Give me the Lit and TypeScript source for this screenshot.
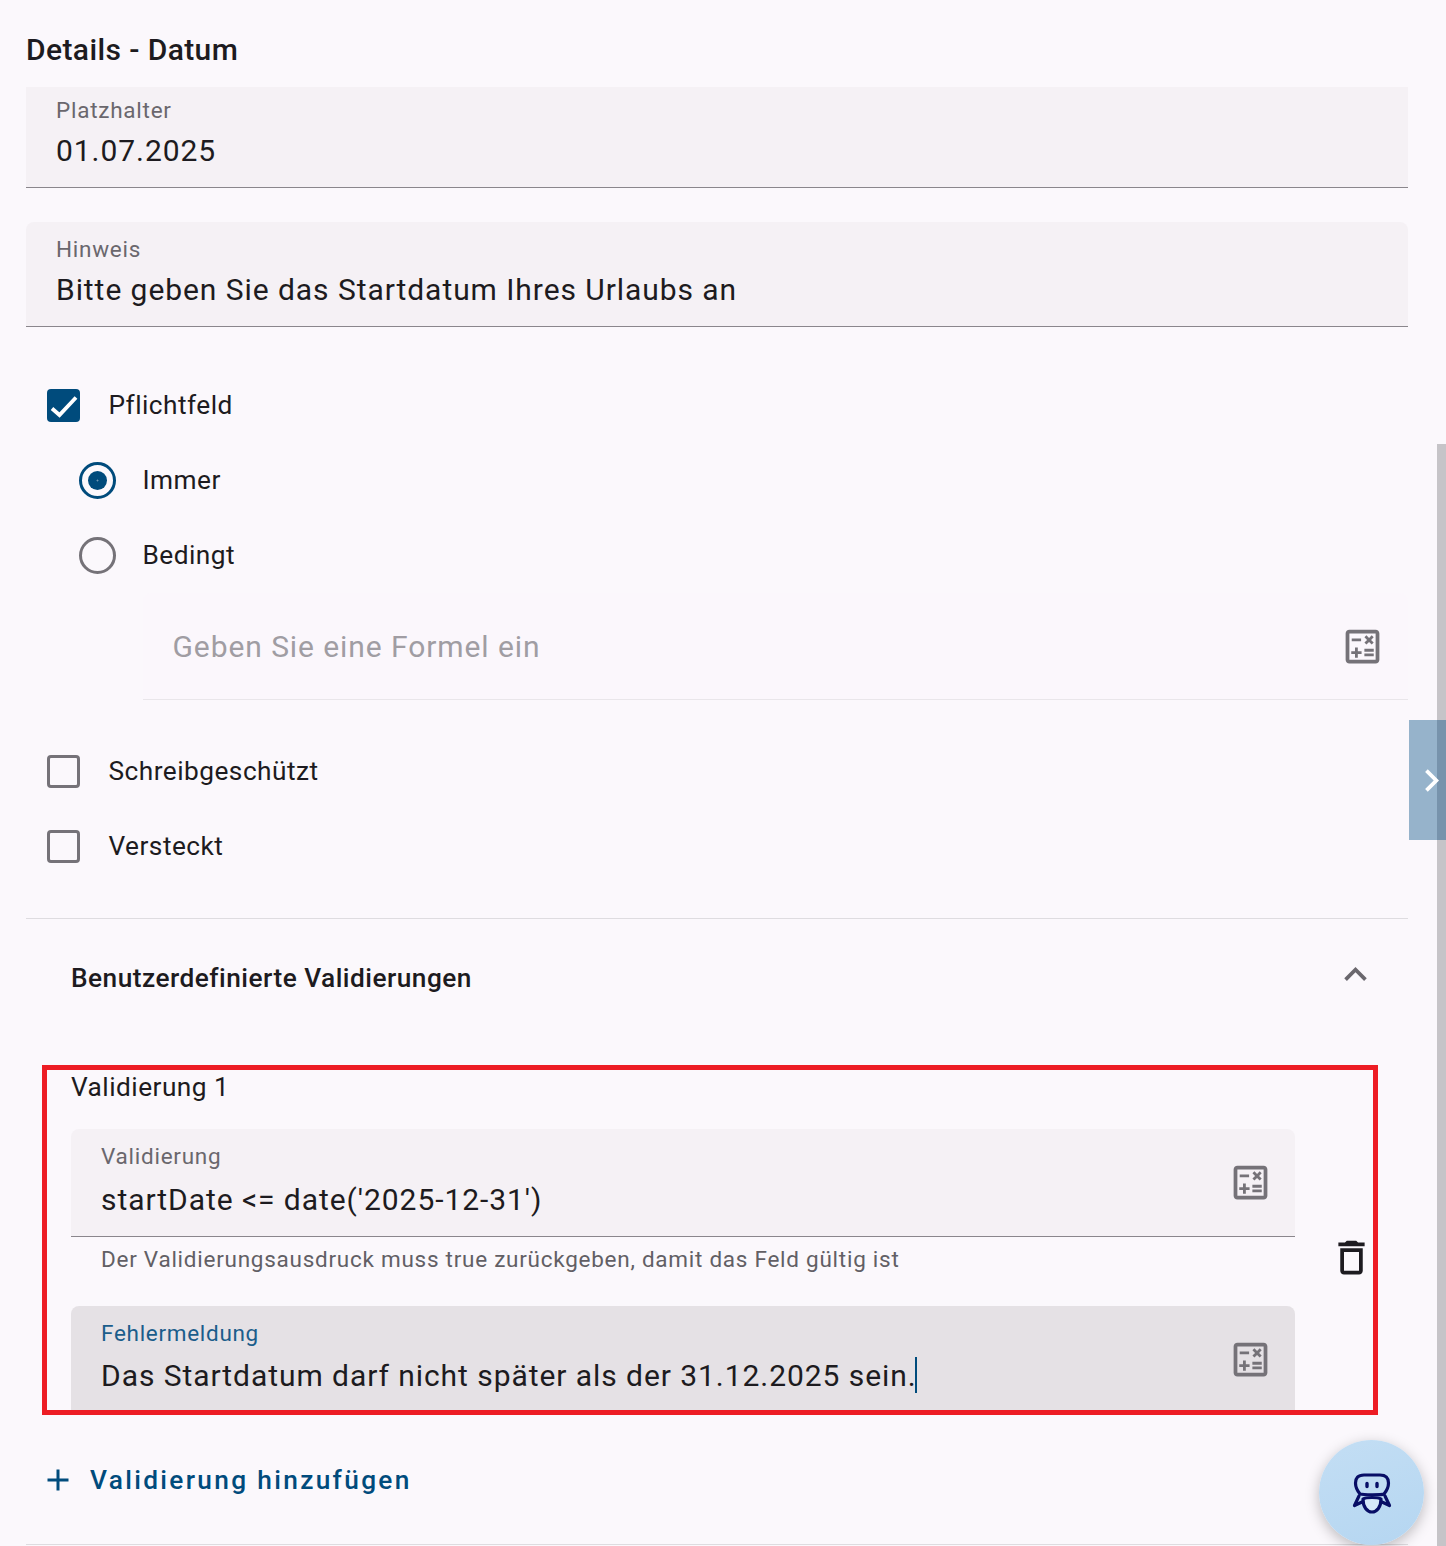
import { LitElement, html, css, svg } from "lit";
import { customElement } from "lit/decorators.js";

const calcIcon = svg`<path d="M19 3H5c-1.1 0-2 .9-2 2v14c0 1.1.9 2 2 2h14c1.1 0 2-.9 2-2V5c0-1.1-.9-2-2-2zm0 16H5V5h14v14z"/><path d="M6.25 7.72h5v1.5h-5zM13 15.75h5v1.5h-5zM13 13.25h5v1.5h-5zM8 18h1.5v-2h2v-1.5h-2v-2H8v2H6v1.5h2zM14.09 10.95l1.41-1.41 1.41 1.41 1.06-1.06-1.41-1.42 1.41-1.41L16.91 6 15.5 7.41 14.09 6l-1.06 1.06 1.41 1.41-1.41 1.42z"/>`;

@customElement("app-root")
export class AppRoot extends LitElement {
  static styles = css`
    :host {
      display: block;
      position: relative;
      height: 1546px;
      overflow: hidden;
      background: #fbf8fc;
      color: #1d1b20;
      font-family: Roboto, "Liberation Sans", sans-serif;
    }
    .page {
      padding: 0 38px 0 26px;
    }
    h2 {
      margin: 0;
      height: 87px;
      padding-top: 32px;
      box-sizing: border-box;
      font-size: 30px;
      line-height: 36px;
      font-weight: 500;
      letter-spacing: 0.4px;
    }
    .field {
      display: flex;
      align-items: center;
      box-sizing: border-box;
      height: 105px;
      padding: 0 22px 0 30px;
      background: #f5f1f5;
      border-bottom: 1px solid #8a868c;
      border-radius: 8px 8px 0 0;
    }
    .field.clipped {
      height: 101px;
      border-radius: 0;
    }
    .field.clipped .label {
      margin-top: 12px;
    }
    .field.second {
      margin-top: 34px;
    }
    .field.tall {
      height: 108px;
    }
    .field.focused {
      height: 107px;
      background: #e5e1e5;
      border-bottom: none;
    }
    .body {
      flex: 1;
      align-self: flex-start;
      min-width: 0;
    }
    .label {
      margin-top: 16px;
      font-size: 22.5px;
      line-height: 22px;
      letter-spacing: 0.75px;
      color: #6a676d;
    }
    .focused .label {
      letter-spacing: 0.7px;
      color: #1b5d8b;
    }
    .value {
      margin-top: 12px;
      font-size: 30px;
      line-height: 36px;
      letter-spacing: 0.94px;
      white-space: nowrap;
    }
    .tall .value {
      margin-top: 15px;
    }
    .focused .value {
      margin-top: 13px;
    }
    .caret {
      display: inline-block;
      width: 2px;
      height: 36px;
      margin-left: -2px;
      vertical-align: -7px;
      background: #004b7c;
    }
    .calc {
      width: 45px;
      height: 45px;
      fill: #757278;
      flex: none;
    }
    .row {
      display: flex;
      align-items: center;
      height: 75px;
      font-size: 26.25px;
      letter-spacing: 0.47px;
    }
    .row span.text {
      margin-top: -2px;
    }
    .row.check {
      padding-left: 21px;
      gap: 28.5px;
    }
    .row.radio {
      padding-left: 53px;
      gap: 26.5px;
    }
    .options {
      margin-top: 41px;
    }
    .box {
      box-sizing: border-box;
      width: 33px;
      height: 33px;
      border: 3.5px solid #757278;
      border-radius: 4px;
      flex: none;
    }
    .box.on {
      border: none;
      background: #004b7c;
    }
    .box svg {
      display: block;
      width: 33px;
      height: 33px;
    }
    .dot {
      box-sizing: border-box;
      display: flex;
      align-items: center;
      justify-content: center;
      width: 37px;
      height: 37px;
      border: 3.75px solid #757278;
      border-radius: 50%;
      flex: none;
    }
    .dot.on {
      border-color: #004b7c;
    }
    .dot.on::after {
      content: "";
      width: 19px;
      height: 19px;
      border-radius: 50%;
      background: radial-gradient(circle, #6f97b3 0.6px, #004b7c 1.3px);
    }
    .formula {
      display: flex;
      align-items: center;
      box-sizing: border-box;
      height: 107px;
      margin-left: 117px;
      padding: 0 23px 0 30px;
      background: #fbf7fc;
      border-bottom: 1px solid #e9e6ea;
      border-radius: 8px 8px 0 0;
    }
    .formula span {
      flex: 1;
      padding-top: 1px;
      margin-left: -0.5px;
      font-size: 30px;
      letter-spacing: 0.92px;
      color: #a09da3;
    }
    .flags {
      margin-top: 34px;
    }
    .divider {
      height: 1px;
      background: #dedce0;
    }
    .divider.top {
      margin-top: 34px;
    }
    .panel-head {
      display: flex;
      align-items: center;
      justify-content: space-between;
      height: 118px;
      padding: 0 30px 0 45px;
    }
    .panel-head strong {
      font-size: 26.25px;
      font-weight: 500;
      letter-spacing: 0.48px;
    }
    .panel-head svg {
      width: 45px;
      height: 45px;
      margin-top: -8px;
      fill: #6a676d;
    }
    .rule {
      display: flex;
      align-items: center;
      margin-left: 45px;
      gap: 34px;
      height: 409px;
    }
    .rule-body {
      flex: 1;
      min-width: 0;
      align-self: flex-start;
    }
    .rule-title {
      margin-top: 30px;
      height: 62px;
      font-size: 26.25px;
      line-height: 40px;
      letter-spacing: 0.47px;
    }
    .hint {
      height: 69px;
      padding: 8px 0 0 30px;
      box-sizing: border-box;
      font-size: 22.5px;
      line-height: 28px;
      letter-spacing: 0.74px;
      color: #625f65;
    }
    .trash {
      width: 45px;
      height: 45px;
      margin: 32px 34px 0 0;
      fill: #1d1b20;
      flex: none;
    }
    .add {
      display: flex;
      align-items: center;
      gap: 14px;
      height: 67px;
      padding: 1px 0 0 14px;
      box-sizing: border-box;
      color: #004b7c;
      font-size: 26.25px;
      font-weight: 500;
      letter-spacing: 2.33px;
    }
    .add svg {
      width: 36px;
      height: 36px;
      fill: #004b7c;
    }
    .divider.end {
      margin-top: 31px;
    }
    .scrollbar {
      position: absolute;
      top: 444px;
      right: 0;
      bottom: 0;
      width: 9px;
      background: #c6c4c8;
    }
    .tab {
      position: absolute;
      top: 720px;
      right: 0;
      width: 37px;
      height: 120px;
      display: flex;
      align-items: center;
      justify-content: flex-end;
      background: rgba(0, 75, 130, 0.4);
    }
    .tab svg {
      width: 45px;
      height: 45px;
      margin-right: -8px;
      fill: #fff;
      flex: none;
    }
    .mark {
      position: absolute;
      left: 42px;
      top: 1065px;
      width: 1336px;
      height: 350px;
      box-sizing: border-box;
      border: 5px solid #ed1c24;
      pointer-events: none;
    }
    .fab {
      position: absolute;
      left: 1319px;
      top: 1440px;
      width: 105px;
      height: 105px;
      display: flex;
      align-items: center;
      justify-content: center;
      border-radius: 50%;
      background: linear-gradient(160deg, #c3def4, #b5d6f1);
      box-shadow: 0 4px 14px rgba(0, 0, 0, 0.25);
    }
    .fab svg {
      width: 42px;
      height: 42px;
      fill: none;
      stroke: #080e66;
      stroke-width: 3.2;
      stroke-linecap: round;
      stroke-linejoin: round;
      overflow: visible;
    }
    .fab .belly {
      fill: #d6e9f8;
    }
  `;

  private calc() {
    return html`<svg class="calc" viewBox="0 0 24 24">${calcIcon}</svg>`;
  }

  render() {
    return html`
      <div class="page">
        <h2>Details - Datum</h2>
        <div class="field clipped">
          <div class="body">
            <div class="label">Platzhalter</div>
            <div class="value">01.07.2025</div>
          </div>
        </div>
        <div class="field second">
          <div class="body">
            <div class="label">Hinweis</div>
            <div class="value">Bitte geben Sie das Startdatum Ihres Urlaubs an</div>
          </div>
        </div>

        <div class="options">
          <div class="row check">
            <span class="box on">
              <svg viewBox="0 0 33 33"><path d="M5 19.5l7.5 6.5L29 8.5" fill="none" stroke="#fff" stroke-width="3.8" /></svg>
            </span>
            <span class="text">Pflichtfeld</span>
          </div>
          <div class="row radio"><span class="dot on"></span><span class="text">Immer</span></div>
          <div class="row radio"><span class="dot"></span><span class="text">Bedingt</span></div>
        </div>
        <div class="formula">
          <span>Geben Sie eine Formel ein</span>
          ${this.calc()}
        </div>
        <div class="flags">
          <div class="row check"><span class="box"></span><span class="text">Schreibgeschützt</span></div>
          <div class="row check"><span class="box"></span><span class="text">Versteckt</span></div>
        </div>
        <div class="divider top"></div>

        <div class="panel-head">
          <strong>Benutzerdefinierte Validierungen</strong>
          <svg viewBox="0 0 24 24"><path d="M12 8l-6 6 1.41 1.41L12 10.83l4.59 4.58L18 14z" /></svg>
        </div>

        <div class="rule">
          <div class="rule-body">
            <div class="rule-title">Validierung 1</div>
            <div class="field tall">
              <div class="body">
                <div class="label">Validierung</div>
                <div class="value">startDate &lt;= date('2025-12-31')</div>
              </div>
              ${this.calc()}
            </div>
            <div class="hint">Der Validierungsausdruck muss true zurückgeben, damit das Feld gültig ist</div>
            <div class="field focused">
              <div class="body">
                <div class="label">Fehlermeldung</div>
                <div class="value">Das Startdatum darf nicht später als der 31.12.2025 sein.<span class="caret"></span></div>
              </div>
              ${this.calc()}
            </div>
          </div>
          <svg class="trash" viewBox="0 0 24 24"><path d="M6 19c0 1.1.9 2 2 2h8c1.1 0 2-.9 2-2V7H6v12zM8 9h8v10H8V9zm7.5-5l-1-1h-5l-1 1H5v2h14V4z" /></svg>
        </div>

        <div class="add">
          <svg viewBox="0 0 24 24"><path d="M19 13h-6v6h-2v-6H5v-2h6V5h2v6h6v2z" /></svg>
          Validierung hinzufügen
        </div>
        <div class="divider end"></div>
      </div>

      <div class="scrollbar"></div>
      <div class="tab">
        <svg viewBox="0 0 24 24"><path d="M10 6L8.59 7.41 13.17 12l-4.58 4.59L10 18l6-6z" /></svg>
      </div>
      <div class="mark"></div>
      <div class="fab">
        <svg viewBox="0 0 42 42">
          <path d="M11 30L3.5 33.5 8 24M31 30l7.5 3.5L34 24" />
          <path class="belly" d="M12 27c3-2 15-2 18 0 0 8-4 13-9 13s-9-5-9-13z" />
          <path d="M13 3h16c6 0 8.500 3 8.500 8 0 4-2 8-4.500 11-2 1-21 1-24 0-2.500-3-4.500-7-4.500-11 0-5 2.500-8 8.500-8z" fill="#c0dcf3" />
          <path d="M16 11.500v3M26 11.500v3" stroke-width="3.4" />
        </svg>
      </div>
    `;
  }
}
